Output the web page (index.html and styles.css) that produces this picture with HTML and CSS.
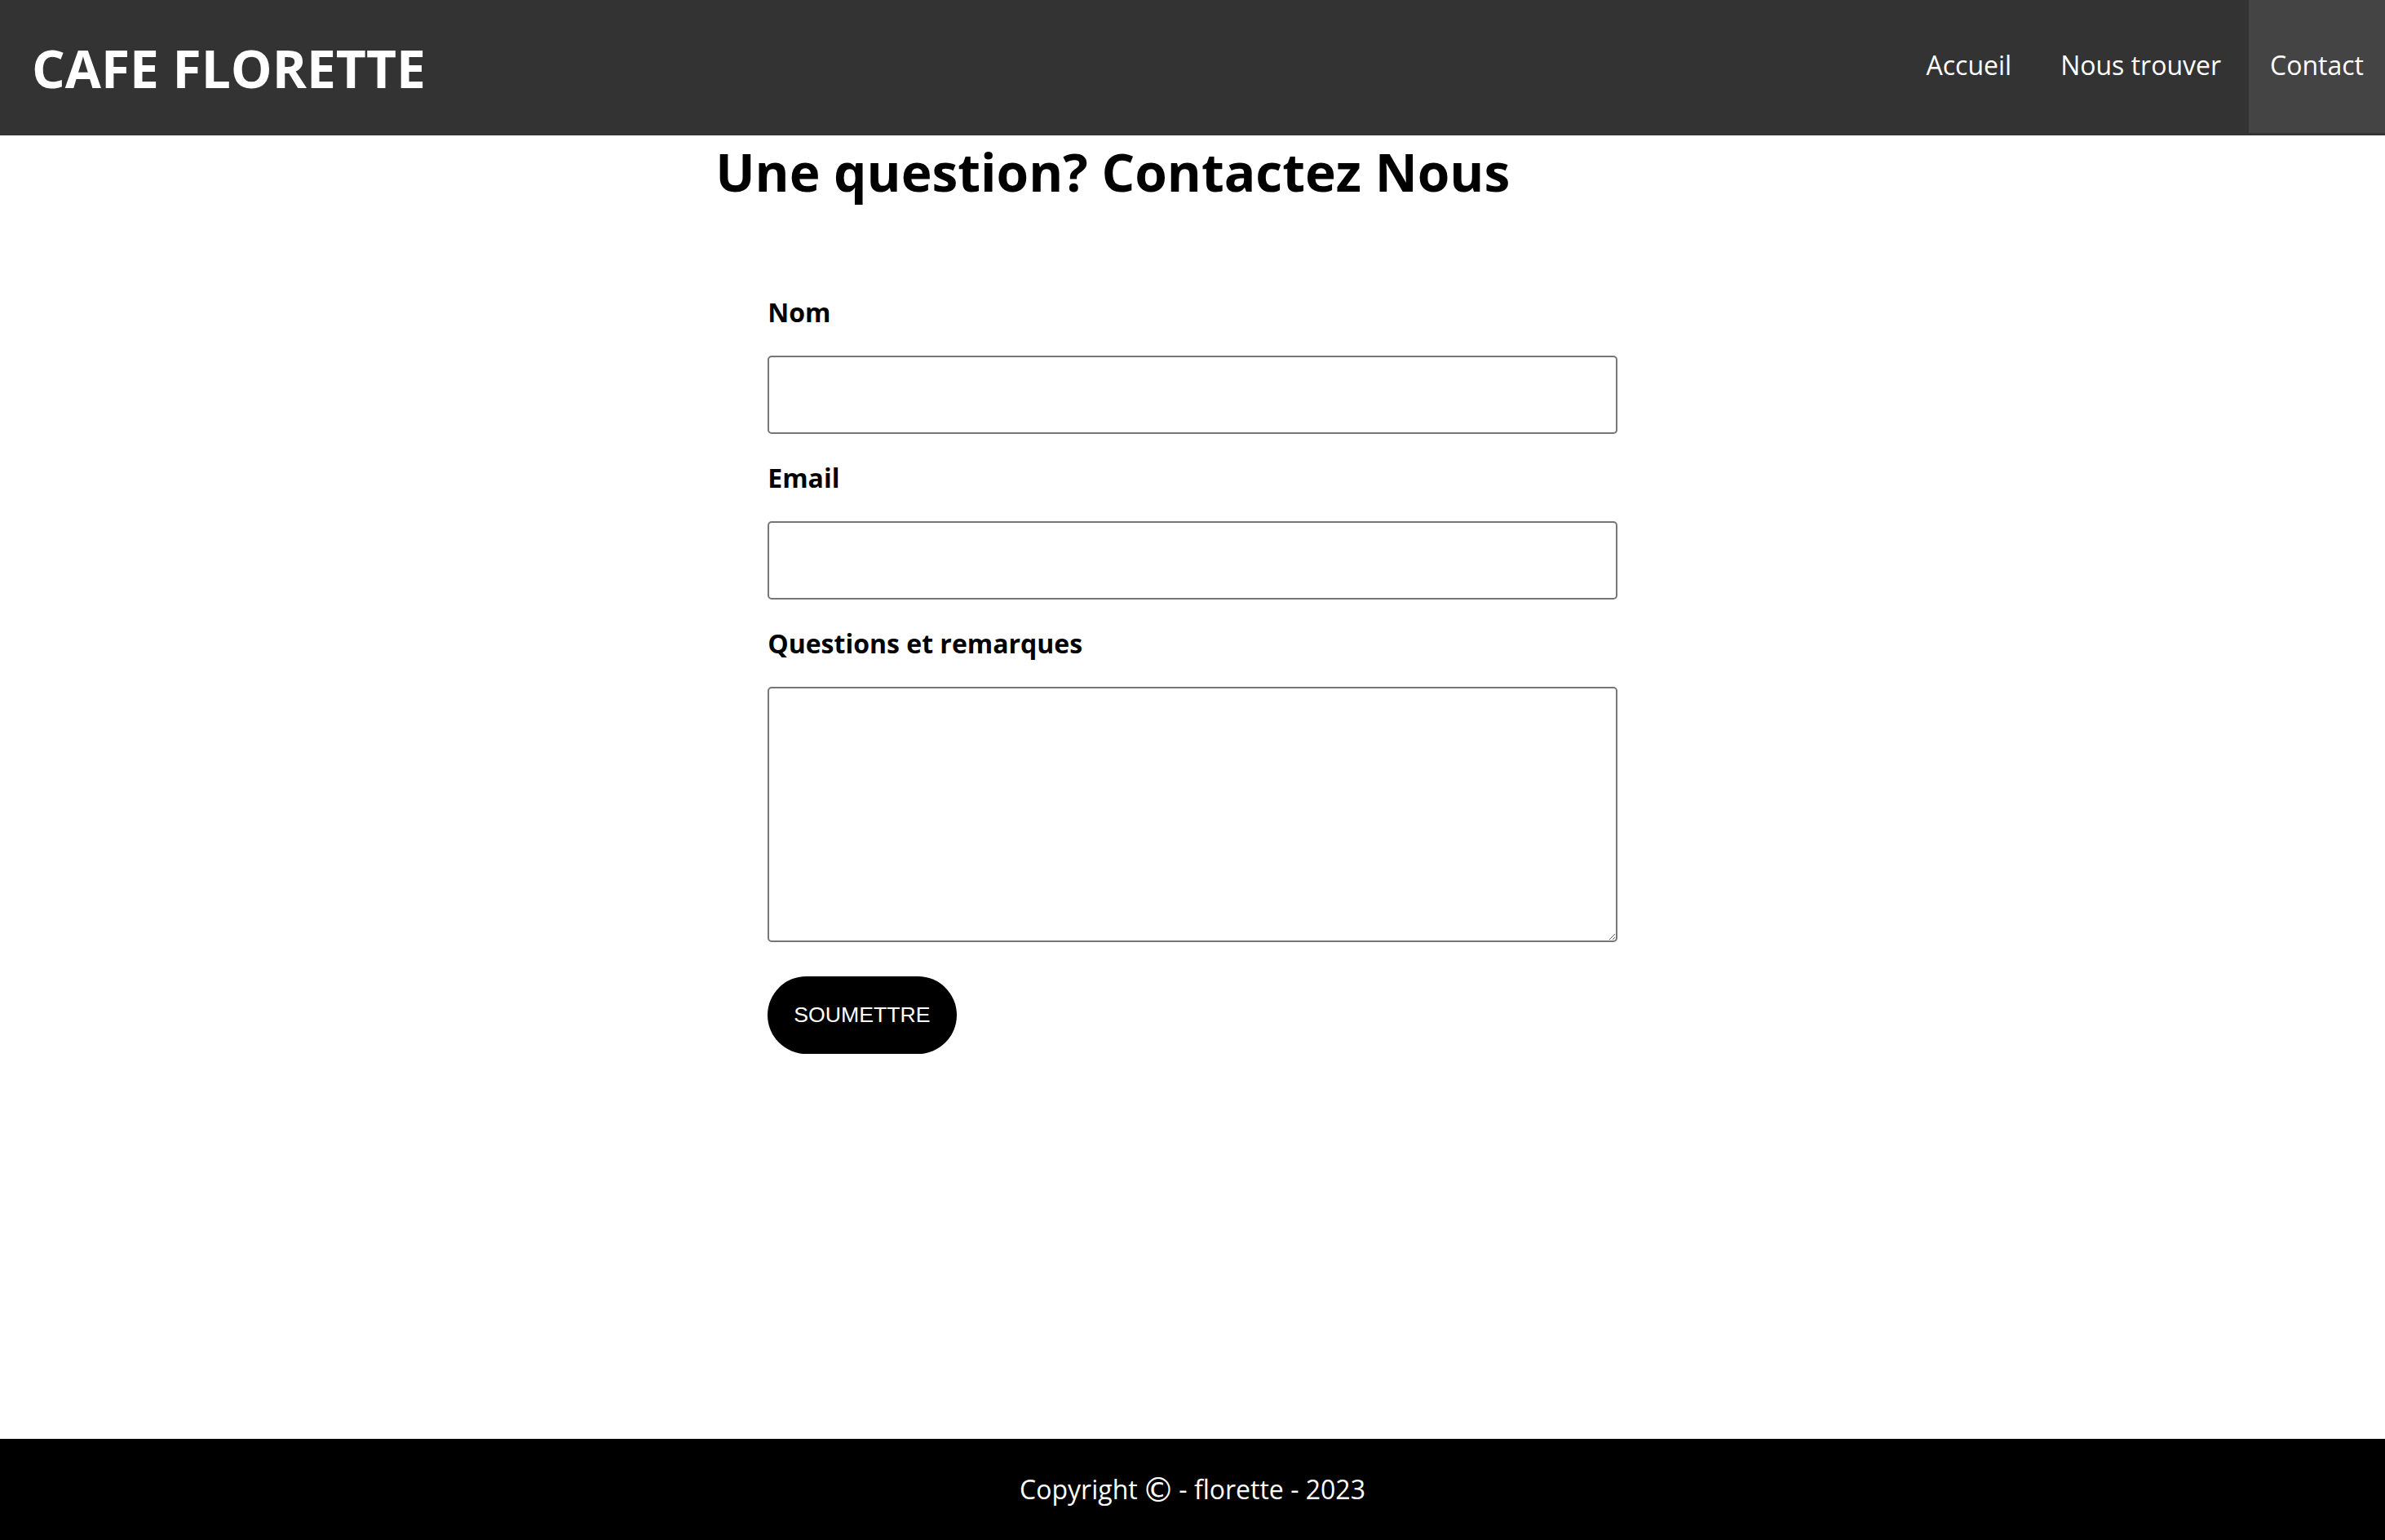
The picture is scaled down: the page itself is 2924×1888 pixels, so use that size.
FILE: index.html
```html
<!DOCTYPE html>
<html lang="fr">
<head>
<meta charset="utf-8">
<title>Cafe Florette - Contact</title>
<link rel="stylesheet" href="styles.css">
</head>
<body>
<header class="site-header">
  <div class="brand">CAFE FLORETTE</div>
  <nav>
    <ul class="nav-list">
      <li><a class="nav-link" href="#">Accueil</a></li>
      <li><a class="nav-link" href="#">Nous trouver</a></li>
      <li><a class="nav-link active" href="#">Contact</a></li>
    </ul>
  </nav>
</header>
<main class="content">
  <div class="container">
    <h1 class="title">Une question? Contactez Nous</h1>
    <form class="contact-form">
      <label class="field-label" for="nom">Nom</label>
      <input class="field-input" type="text" id="nom">
      <label class="field-label" for="email">Email</label>
      <input class="field-input" type="email" id="email">
      <label class="field-label" for="msg">Questions et remarques</label>
      <textarea class="field-area" id="msg"></textarea>
      <button class="submit" type="button">SOUMETTRE</button>
    </form>
  </div>
</main>
<footer class="site-footer">
  <p class="footer-text">Copyright <span class="copy">©</span> - florette - 2023</p>
</footer>
</body>
</html>
```

FILE: styles.css
```css
html, body {
  margin: 0;
  padding: 0;
}

body {
  font-family: "Open Sans", "DejaVu Sans", sans-serif;
  color: #000;
  background: #fff;
  min-height: 100vh;
  display: flex;
  flex-direction: column;
}

.site-header {
  background: #333333;
  height: 166px;
  display: flex;
  justify-content: space-between;
  align-items: flex-start;
}

.brand {
  color: #fff;
  font-weight: 700;
  font-size: 64px;
  line-height: normal;
  padding: 40px 0 0 39px;
}

.nav-list {
  list-style: none;
  margin: 0;
  padding: 0;
  display: flex;
  gap: 8px;
}

.nav-link {
  display: block;
  box-sizing: border-box;
  height: 163px;
  padding: 58px 26px 0;
  color: #fff;
  text-decoration: none;
  font-size: 32px;
  line-height: normal;
}

.nav-link.active {
  background: #444444;
}

.content {
  flex: 1;
}

.container {
  width: 40%;
  margin: 0 auto;
}

.title {
  margin: 1px 0 0;
  font-size: 64px;
  font-weight: 700;
  line-height: normal;
}

.contact-form {
  padding: 107px 64px 0;
}

.field-label {
  display: block;
  font-weight: 700;
  font-size: 32px;
  line-height: normal;
  margin-bottom: 32px;
}

.field-input,
.field-area {
  display: block;
  box-sizing: border-box;
  width: 100%;
  border: 2px solid #767676;
  border-radius: 5px;
  background: #fff;
  margin: 0 0 32px;
}

.field-input {
  height: 96px;
}

.field-area {
  height: 313px;
  margin-bottom: 42px;
  resize: both;
}

.submit {
  display: block;
  height: 95px;
  padding: 0 32px;
  border: none;
  border-radius: 48px;
  background: #000;
  color: #fff;
  font-family: "Liberation Sans", Arial, sans-serif;
  font-size: 26.67px;
}

.site-footer {
  background: #000;
  color: #fff;
  height: 124px;
  display: flex;
  align-items: center;
  justify-content: center;
}

.footer-text {
  margin: 0;
  font-size: 32px;
  line-height: 44px;
}

.copy {
  font-family: "DejaVu Sans", sans-serif;
  font-size: 40px;
  line-height: 1;
  margin: 0 -3px;
  vertical-align: -3px;
}
```
